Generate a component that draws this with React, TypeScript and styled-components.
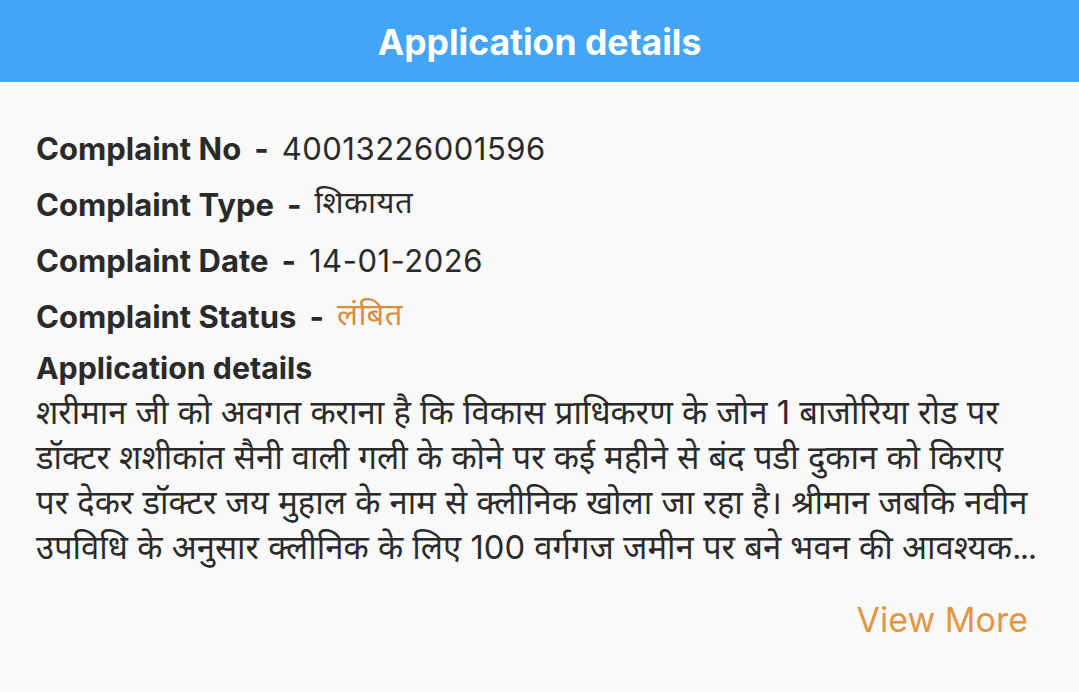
import React from "react";
import styled, { createGlobalStyle } from "styled-components";

const GlobalStyle = createGlobalStyle`
  html, body {
    margin: 0;
    padding: 0;
    background: #f9f9f9;
  }
  body {
    font-family: Inter, "Noto Sans Devanagari", "Noto Sans", sans-serif;
    color: #2a2a2a;
  }
`;

const Page = styled.div`
  width: 1079px;
  height: 692px;
  display: flex;
  flex-direction: column;
  background: #f9f9f9;
  overflow: hidden;
`;

const Header = styled.header`
  height: 82px;
  padding-top: 4px;
  box-sizing: border-box;
  background: #42a5f5;
  display: flex;
  align-items: center;
  justify-content: center;
  flex-shrink: 0;
`;

const HeaderTitle = styled.h1`
  margin: 0;
  color: #ffffff;
  font-size: 35.5px;
  font-weight: 700;
  line-height: 40px;
`;

const Body = styled.div`
  padding: 38px 20px 0 36px;
  display: flex;
  flex-direction: column;
`;

const InfoRow = styled.div`
  display: flex;
  align-items: center;
  height: 56px;
`;

const Label = styled.span`
  font-size: 31px;
  font-weight: 700;
  color: #2a2a2a;
`;

const Dash = styled.span`
  font-size: 31px;
  font-weight: 700;
  margin: 0 13px 0 13px;
`;

const Value = styled.span<{ $accent?: boolean }>`
  font-size: 31px;
  font-weight: 400;
  letter-spacing: 0.5px;
  color: ${(p) => (p.$accent ? "#dc8b3c" : "#2a2a2a")};
`;

const SectionTitle = styled.h2`
  margin: 4px 0 0;
  font-size: 30.3px;
  font-weight: 700;
  line-height: 40px;
`;

const Paragraph = styled.p`
  margin: 2px 17px 0 0;
  font-size: 32.8px;
  line-height: 45px;
  color: #2a2a2a;
`;

const Ellipsis = styled.span`
  letter-spacing: -1.5px;
`;

const MoreLink = styled.a`
  align-self: flex-end;
  margin: 30px 31px 0 0;
  font-size: 34px;
  line-height: 40px;
  color: #e3953f;
  text-decoration: none;
  cursor: pointer;
`;

const rows: { label: string; value: string; accent?: boolean }[] = [
  { label: "Complaint No", value: "40013226001596" },
  { label: "Complaint Type", value: "शिकायत" },
  { label: "Complaint Date", value: "14-01-2026" },
  { label: "Complaint Status", value: "लंबित", accent: true },
];

const details =
  "शरीमान जी को अवगत कराना है कि विकास प्राधिकरण के जोन 1 बाजोरिया रोड पर डॉक्टर शशीकांत सैनी वाली गली के कोने पर कई महीने से बंद पडी दुकान को किराए पर देकर डॉक्टर जय मुहाल के नाम से क्लीनिक खोला जा रहा है। श्रीमान जबकि नवीन उपविधि के अनुसार क्लीनिक के लिए 100 वर्गगज जमीन पर बने भवन की आवश्यक";

const App = () => {
  return (
    <Page>
      <GlobalStyle />
      <Header>
        <HeaderTitle>Application details</HeaderTitle>
      </Header>
      <Body>
        {rows.map((r) => (
          <InfoRow key={r.label}>
            <Label>{r.label}</Label>
            <Dash>-</Dash>
            <Value $accent={r.accent}>{r.value}</Value>
          </InfoRow>
        ))}
        <SectionTitle>Application details</SectionTitle>
        <Paragraph>
          {details}
          <Ellipsis>...</Ellipsis>
        </Paragraph>
        <MoreLink>View More</MoreLink>
      </Body>
    </Page>
  );
};

export default App;
